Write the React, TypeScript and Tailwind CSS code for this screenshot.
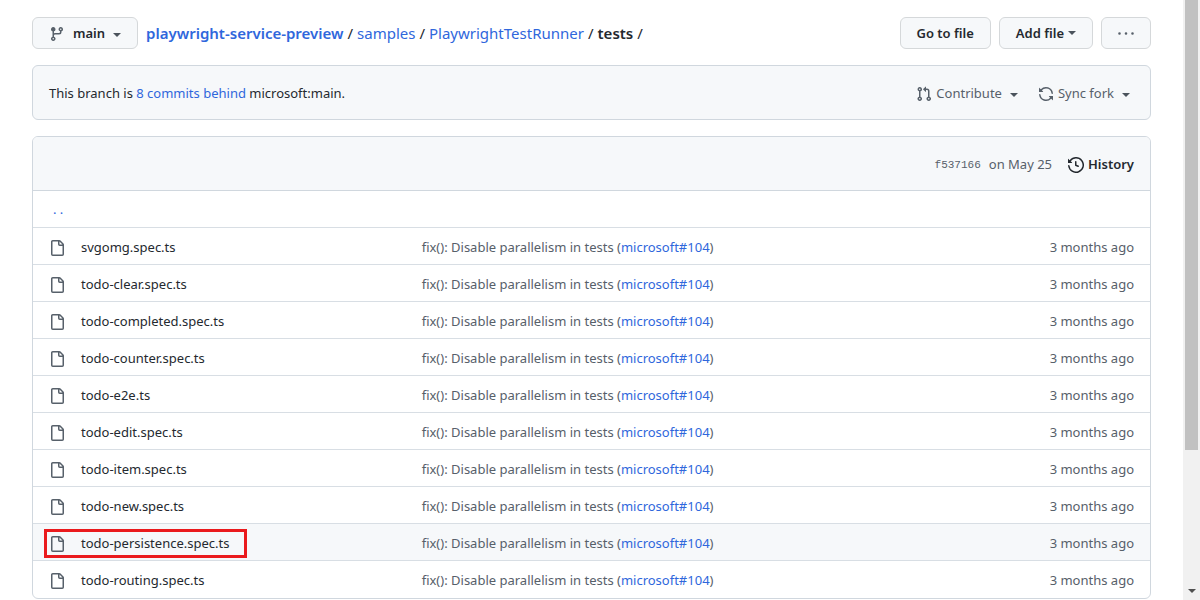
import type { ReactNode } from "react";

const ICONS = {
  branch:
    "M11.75 2.5a.75.75 0 100 1.5.75.75 0 000-1.5zm-2.25.75a2.25 2.25 0 113 2.122V6A2.5 2.5 0 0110 8.5H6a1 1 0 00-1 1v1.128a2.251 2.251 0 11-1.5 0V5.372a2.25 2.25 0 111.5 0v1.836A2.492 2.492 0 016 7h4a1 1 0 001-1v-.628A2.25 2.25 0 019.5 3.25zM4.25 12a.75.75 0 100 1.5.75.75 0 000-1.5zM3.5 3.25a.75.75 0 111.5 0 .75.75 0 01-1.5 0z",
  pullRequest:
    "M7.177 3.073L9.573.677A.25.25 0 0110 .854v4.792a.25.25 0 01-.427.177L7.177 3.427a.25.25 0 010-.354zM3.75 2.5a.75.75 0 100 1.5.75.75 0 000-1.5zm-2.25.75a2.25 2.25 0 113 2.122v5.256a2.251 2.251 0 11-1.5 0V5.372A2.25 2.25 0 011.5 3.25zM11 2.5h-1V4h1a1 1 0 011 1v5.628a2.251 2.251 0 101.5 0V5A2.5 2.5 0 0011 2.5zm1 10.25a.75.75 0 111.5 0 .75.75 0 01-1.5 0zM3.75 12a.75.75 0 100 1.5.75.75 0 000-1.5z",
  sync: "M1.705 8.005a.75.75 0 0 1 .834.656 5.5 5.5 0 0 0 9.592 2.97l-1.204-1.204a.25.25 0 0 1 .177-.427h3.646a.25.25 0 0 1 .25.25v3.646a.25.25 0 0 1-.427.177l-1.38-1.38A7.002 7.002 0 0 1 1.05 8.84a.75.75 0 0 1 .656-.834ZM8 2.5a5.487 5.487 0 0 0-4.131 1.869l1.204 1.204A.25.25 0 0 1 4.896 6H1.25A.25.25 0 0 1 1 5.75V2.104a.25.25 0 0 1 .427-.177l1.38 1.38A7.002 7.002 0 0 1 14.95 7.16a.75.75 0 0 1-1.49.178A5.5 5.5 0 0 0 8 2.5Z",
  history:
    "m.427 1.927 1.215 1.215a8.002 8.002 0 1 1-1.6 5.685.75.75 0 1 1 1.493-.154 6.5 6.5 0 1 0 1.18-4.458l1.358 1.358A.25.25 0 0 1 3.896 6H.25A.25.25 0 0 1 0 5.75V2.104a.25.25 0 0 1 .427-.177ZM7.75 4a.75.75 0 0 1 .75.75v2.992l2.028.812a.75.75 0 0 1-.557 1.392l-2.5-1A.751.751 0 0 1 7 8.25v-3.5A.75.75 0 0 1 7.75 4Z",
  file: "M2 1.75C2 .784 2.784 0 3.75 0h6.586c.464 0 .909.184 1.237.513l2.914 2.914c.329.328.513.773.513 1.237v9.586A1.75 1.75 0 0 1 13.25 16h-9.5A1.75 1.75 0 0 1 2 14.25Zm1.75-.25a.25.25 0 0 0-.25.25v12.5c0 .138.112.25.25.25h9.5a.25.25 0 0 0 .25-.25V6h-2.75A1.75 1.75 0 0 1 9 4.25V1.5Zm6.75.062V4.25c0 .138.112.25.25.25h2.688l-.011-.013-2.914-2.914-.013-.011Z",
  kebab:
    "M8 9.8a1.3 1.3 0 100-2.6 1.3 1.3 0 000 2.6zM1.5 9.8a1.3 1.3 0 100-2.6 1.3 1.3 0 000 2.6zM14.5 9.8a1.3 1.3 0 100-2.6 1.3 1.3 0 000 2.6z",
};

function Icon({ name, className = "" }: { name: keyof typeof ICONS; className?: string }) {
  return (
    <svg viewBox="0 0 16 16" aria-hidden="true" className={`size-4 shrink-0 fill-current ${className}`}>
      <path d={ICONS[name]} />
    </svg>
  );
}

function Caret({ className = "" }: { className?: string }) {
  return (
    <svg viewBox="0 0 8 4" aria-hidden="true" className={`h-1 w-2 shrink-0 fill-[#4b535c] ${className}`}>
      <path d="M0 0h8L4 4z" />
    </svg>
  );
}

function Button({ children, label }: { children: ReactNode; label?: string }) {
  return (
    <button
      type="button"
      aria-label={label}
      className="flex h-8 items-center rounded-md border border-[#d5d8da] bg-[#f6f8fa] px-4 text-[13px] font-semibold whitespace-nowrap"
    >
      {children}
    </button>
  );
}

function TextLink({ children, className = "" }: { children: ReactNode; className?: string }) {
  return (
    <a href="#" className={`text-[#2f67dc] ${className}`}>
      {children}
    </a>
  );
}

const FILES = [
  "svgomg.spec.ts",
  "todo-clear.spec.ts",
  "todo-completed.spec.ts",
  "todo-counter.spec.ts",
  "todo-e2e.ts",
  "todo-edit.spec.ts",
  "todo-item.spec.ts",
  "todo-new.spec.ts",
  "todo-persistence.spec.ts",
  "todo-routing.spec.ts",
];
const SELECTED = "todo-persistence.spec.ts";

function FileRow({ name }: { name: string }) {
  const selected = name === SELECTED;
  return (
    <tr className={`h-[37px] border-t border-[#d8dee4] ${selected ? "bg-[#f6f8fa]" : ""}`}>
      <td className="relative pt-1 pl-4">
        <Icon name="file" className="text-[#57606a]" />
        {selected && (
          <span className="pointer-events-none absolute top-[5px] left-[11px] h-[29px] w-[203px] border-3 border-[#ea1a1d]" />
        )}
      </td>
      <td className="pt-0.5">
        <a href="#">{name}</a>
      </td>
      <td className="pt-0.5 text-[#57606a]">
        fix(): Disable parallelism in tests (<TextLink>microsoft#104</TextLink>)
      </td>
      <td className="pt-0.5 pr-4 text-right text-[#57606a]">3 months ago</td>
    </tr>
  );
}

export default function App() {
  return (
    <div className="flex min-h-screen bg-white font-['Noto_Sans',sans-serif] text-[13px] leading-5 text-[#24292f]">
      <main className="min-w-0 flex-1 px-8 pt-[17px]">
        <header className="flex items-center gap-2">
          <Button>
            <Icon name="branch" className="mt-0.5 mr-2 text-[#57606a]" />
            main
            <Caret className="mt-1 ml-2" />
          </Button>
          <nav aria-label="Breadcrumb" className="flex flex-1 gap-1 text-[15px] whitespace-nowrap">
            <TextLink className="font-semibold">playwright-service-preview</TextLink>
            <span>/</span>
            <TextLink>samples</TextLink>
            <span>/</span>
            <TextLink>PlaywrightTestRunner</TextLink>
            <span>/</span>
            <strong className="font-semibold">tests</strong>
            <span>/</span>
          </nav>
          <Button>Go to file</Button>
          <Button>
            Add file
            <Caret className="ml-1" />
          </Button>
          <Button label="More options">
            <Icon name="kebab" className="text-[#57606a]" />
          </Button>
        </header>

        <section className="mt-4 flex h-[55px] items-center rounded-md border border-[#d0d7de] bg-[#f6f8fa] px-4">
          <p className="flex-1">
            This branch is <TextLink>8 commits behind</TextLink> microsoft:main.
          </p>
          <div className="flex gap-4 text-[#57606a]">
            <button type="button" className="flex items-center">
              <Icon name="pullRequest" className="mt-0.5 mr-1" />
              Contribute
              <Caret className="mt-1 mr-1 ml-2" />
            </button>
            <button type="button" className="flex items-center">
              <Icon name="sync" className="mt-0.5 mr-1" />
              Sync fork
              <Caret className="mt-1 mr-1 ml-2" />
            </button>
          </div>
        </section>

        <section className="mt-4 overflow-hidden rounded-md border border-[#d0d7de]">
          <div className="flex h-[53px] items-center justify-end bg-[#f6f8fa] px-4 text-[#57606a]">
            <a href="#" className="mt-0.5 mr-2 font-['Liberation_Mono',monospace] text-[11px]">
              f537166
            </a>
            <span>on May 25</span>
            <a href="#" className="ml-4 flex items-center gap-1 font-semibold text-[#24292f]">
              <Icon name="history" className="mt-0.5" />
              History
            </a>
          </div>
          <table className="w-full table-fixed border-collapse">
            <colgroup>
              <col className="w-12" />
              <col className="w-[30.5%]" />
              <col />
              <col className="w-36" />
            </colgroup>
            <tbody>
              <tr className="h-[37px] border-t border-[#d0d7de]">
                <td colSpan={4} className="pl-5">
                  <TextLink>. .</TextLink>
                </td>
              </tr>
              {FILES.map((name) => (
                <FileRow key={name} name={name} />
              ))}
            </tbody>
          </table>
        </section>
      </main>

      <aside aria-hidden="true" className="flex w-[17px] shrink-0 flex-col items-center justify-between bg-[#f1f1f1]">
        <div className="h-[75vh] w-[13px] bg-[#c1c1c1]" />
        <Caret className="mb-[7px] fill-[#505050]" />
      </aside>
    </div>
  );
}
